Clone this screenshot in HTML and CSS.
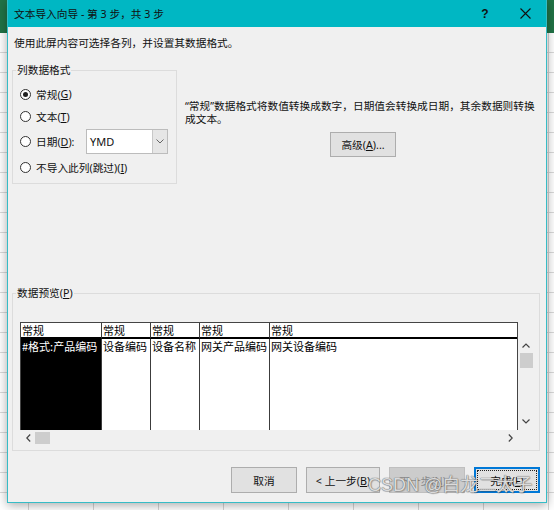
FILE: index.html
```html
<!DOCTYPE html>
<html lang="zh-CN">
<head>
<meta charset="utf-8">
<title>文本导入向导</title>
<link rel="stylesheet" href="styles.css">
</head>
<body>
<div class="desktop">
  <div class="window">
    <div class="titlebar">
      <span class="title">文本导入向导 - 第 3 步，共 3 步</span>
      <span class="help">?</span>
      <span class="close"><svg width="11" height="11" viewBox="0 0 11 11"><path d="M0.5 0.5L10.5 10.5M10.5 0.5L0.5 10.5" stroke="#111" stroke-width="1.1" fill="none"/></svg></span>
    </div>
    <div class="content">
      <p class="intro">使用此屏内容可选择各列，并设置其数据格式。</p>
      <div class="top">
        <fieldset class="group format">
          <legend>列数据格式</legend>
          <div class="row r1"><span class="radio on"></span>常规(<u>G</u>)</div>
          <div class="row r2"><span class="radio"></span>文本(<u>T</u>)</div>
          <div class="row r3"><span class="radio"></span>日期(<u>D</u>):
            <div class="combo"><span class="val">YMD</span><span class="arrow"><svg width="8" height="5" viewBox="0 0 8 5"><path d="M0.5 0.5L4 4L7.5 0.5" stroke="#666" fill="none"/></svg></span></div>
          </div>
          <div class="row r4"><span class="radio"></span>不导入此列(跳过)(<u>I</u>)</div>
        </fieldset>
        <div class="info">
          <p>“常规”数据格式将数值转换成数字，日期值会转换成日期，其余数据则转换成文本。</p>
          <button class="btn adv">高级(<u>A</u>)...</button>
        </div>
      </div>
      <fieldset class="group preview">
        <legend>数据预览(<u>P</u>)</legend>
        <div class="grid-wrap">
          <div class="tcol">
            <div class="table">
              <div class="cell th">常规</div>
              <div class="cell th sep">常规</div>
              <div class="cell th sep">常规</div>
              <div class="cell th sep">常规</div>
              <div class="cell th sep">常规</div>
              <div class="cell td sel">#格式:产品编码</div>
              <div class="cell td sep">设备编码</div>
              <div class="cell td sep">设备名称</div>
              <div class="cell td sep">网关产品编码</div>
              <div class="cell td sep">网关设备编码</div>
            </div>
            <div class="hscroll">
              <span class="hl"><svg width="5" height="8" viewBox="0 0 5 8"><path d="M4.2 0.5L0.8 4L4.2 7.5" stroke="#444" stroke-width="1.2" fill="none"/></svg><span class="hthumb"></span></span>
              <svg width="5" height="8" viewBox="0 0 5 8"><path d="M0.8 0.5L4.2 4L0.8 7.5" stroke="#444" stroke-width="1.2" fill="none"/></svg>
            </div>
          </div>
          <div class="vscroll">
            <svg width="8" height="5" viewBox="0 0 8 5"><path d="M0.5 4.5L4 1L7.5 4.5" stroke="#444" stroke-width="1.2" fill="none"/></svg>
            <span class="vthumb"></span>
            <span class="spacer"></span>
            <svg width="8" height="5" viewBox="0 0 8 5"><path d="M0.5 0.5L4 4L7.5 0.5" stroke="#444" stroke-width="1.2" fill="none"/></svg>
          </div>
        </div>
      </fieldset>
      <div class="buttons">
        <button class="btn b-cancel">取消</button>
        <button class="btn b-prev">&lt; 上一步(<u>B</u>)</button>
        <button class="btn b-next disabled">下一步(<u>N</u>) &gt;</button>
        <button class="btn b-finish default">完成(<u>F</u>)</button>
      </div>
    </div>
    <div class="watermark">CSDN @白龙二太子</div>
  </div>
</div>
</body>
</html>
```

FILE: styles.css
```css
* { box-sizing: border-box; }
html, body { margin: 0; padding: 0; }
body {
  width: 554px;
  height: 510px;
  overflow: hidden;
  font-family: "Noto Sans", "Noto Sans CJK SC", sans-serif;
  font-size: 10.7px;
  color: #111;
  background:
    linear-gradient(#217346, #217346) 0 0 / 100% 33px no-repeat,
    repeating-linear-gradient(to right, transparent 0 28px, #d4d4d4 28px 29px, transparent 29px 65px),
    repeating-linear-gradient(to bottom, transparent 0 19px, #d9d9d9 19px 20px) 0 33px / 100% 100% no-repeat,
    #ffffff;
}
.desktop { padding-left: 7px; }
.window {
  position: relative;
  width: 540px;
  height: 503px;
  background: #f0f0f0;
  border: 1px solid #36bcc6;
  border-top: 0;
  box-shadow: 0 2px 10px rgba(0, 0, 0, 0.35);
  display: flex;
  flex-direction: column;
}
.titlebar {
  height: 27px;
  flex: none;
  background: #00b7c3;
  display: flex;
  align-items: center;
  padding-left: 6px;
  color: #111;
}
.title { flex: 1; }
.help {
  width: 30px;
  text-align: center;
  font-size: 12px;
  font-weight: bold;
  font-family: "Liberation Sans", sans-serif;
}
.close {
  width: 42px;
  margin-left: 4px;
  display: flex;
  justify-content: center;
}
.content { flex: 1; display: flex; flex-direction: column; }
.intro { margin: 9px 0 0 6px; line-height: 14px; }
.top { display: flex; margin-top: 13px; }
.group {
  border: 1px solid #dcdcdc;
  min-width: 0;
}
legend {
  padding: 0 1px;
  margin-left: -4px;
  line-height: 14px;
}
.format {
  width: 165px;
  flex: none;
  margin: 0 0 0 4px;
  padding: 6px 8px 4px 7px;
}
.row { display: flex; align-items: center; }
.r1 { height: 22px; }
.r2 { height: 23px; }
.r3 { height: 25px; margin-top: 1px; }
.r4 { height: 23px; margin-top: 2px; }
.radio {
  flex: none;
  width: 11px;
  height: 11px;
  border: 1px solid #333;
  border-radius: 50%;
  background: #fff;
  margin-right: 5px;
  display: grid;
  place-items: center;
}
.radio.on::after {
  content: "";
  width: 5px;
  height: 5px;
  border-radius: 50%;
  background: #222;
}
.combo {
  margin-left: auto;
  width: 82px;
  height: 25px;
  border: 1px solid #bcbcbc;
  background: #fff;
  display: flex;
}
.combo .val { flex: 1; padding-left: 3px; line-height: 23px; font-size: 11px; }
.combo .arrow {
  width: 15px;
  border-left: 1px solid #c8c8c8;
  background: #e6e6e6;
  display: grid;
  place-items: center;
}
.info {
  flex: 1;
  padding: 37px 5px 0 8px;
  display: flex;
  flex-direction: column;
}
.info p { margin: 0; line-height: 13px; }
.btn {
  font: inherit;
  color: #111;
  background: #e1e1e1;
  border: 1px solid #adadad;
  height: 25px;
  padding: 0;
  border-radius: 0;
}
.adv { width: 66px; align-self: center; margin-top: 6px; }
.preview {
  margin: 102px 6px 0 4px;
  padding: 22px 5px 4px 7px;
}
.grid-wrap { display: flex; }
.tcol { width: 498px; flex: none; }
.table {
  height: 108px;
  border: 1px solid #444;
  border-bottom: 0;
  background: #fff;
  display: grid;
  grid-template-columns: 80px 49px 49px 70px 1fr;
  grid-template-rows: 16px 1fr;
  font-family: "Noto Sans CJK SC", sans-serif;
  font-size: 11px;
  color: #000;
}
.cell { padding-left: 1px; line-height: 14px; white-space: nowrap; overflow: hidden; }
.th { border-bottom: 2px solid #000; }
.sep { border-left: 1px solid #3c3c3c; }
.td.sel { background: #000; color: #fff; }
.hscroll {
  height: 16px;
  display: flex;
  align-items: center;
  justify-content: space-between;
  padding: 0 5px 0 6px;
}
.hl { display: flex; align-items: center; }
.hthumb {
  width: 15px;
  height: 12px;
  margin-left: 4px;
  background: #cdcdcd;
}
.vscroll {
  width: 16px;
  height: 92px;
  margin-top: 16px;
  display: flex;
  flex-direction: column;
  align-items: center;
  padding: 5px 0 6px;
}
.vthumb {
  width: 13px;
  height: 15px;
  margin-top: 5px;
  background: #cdcdcd;
}
.spacer { flex: 1; }
.buttons {
  margin-top: 16px;
  display: flex;
  justify-content: flex-end;
  gap: 9px;
  padding-right: 6px;
}
.buttons .btn { height: 26px; }
.b-cancel { width: 66px; }
.b-prev { width: 74px; }
.b-next { width: 76px; }
.b-finish { width: 66px; }
.btn.disabled { background: #cccccc; border-color: #bfbfbf; color: #8a8a8a; }
.btn.default {
  border: 2px solid #0078d7;
  outline: 1px dotted #222;
  outline-offset: -4px;
}
.watermark {
  position: absolute;
  left: 360px;
  top: 474px;
  font-family: "Liberation Sans", "Noto Sans CJK SC", sans-serif;
  font-size: 18px;
  line-height: 22px;
  white-space: nowrap;
  color: rgba(240, 240, 240, 0.85);
  text-shadow: 0 0 1px #6a6a6a, 0 0 1px #6a6a6a, 1px 1px 1px rgba(0, 0, 0, 0.2);
}
```
